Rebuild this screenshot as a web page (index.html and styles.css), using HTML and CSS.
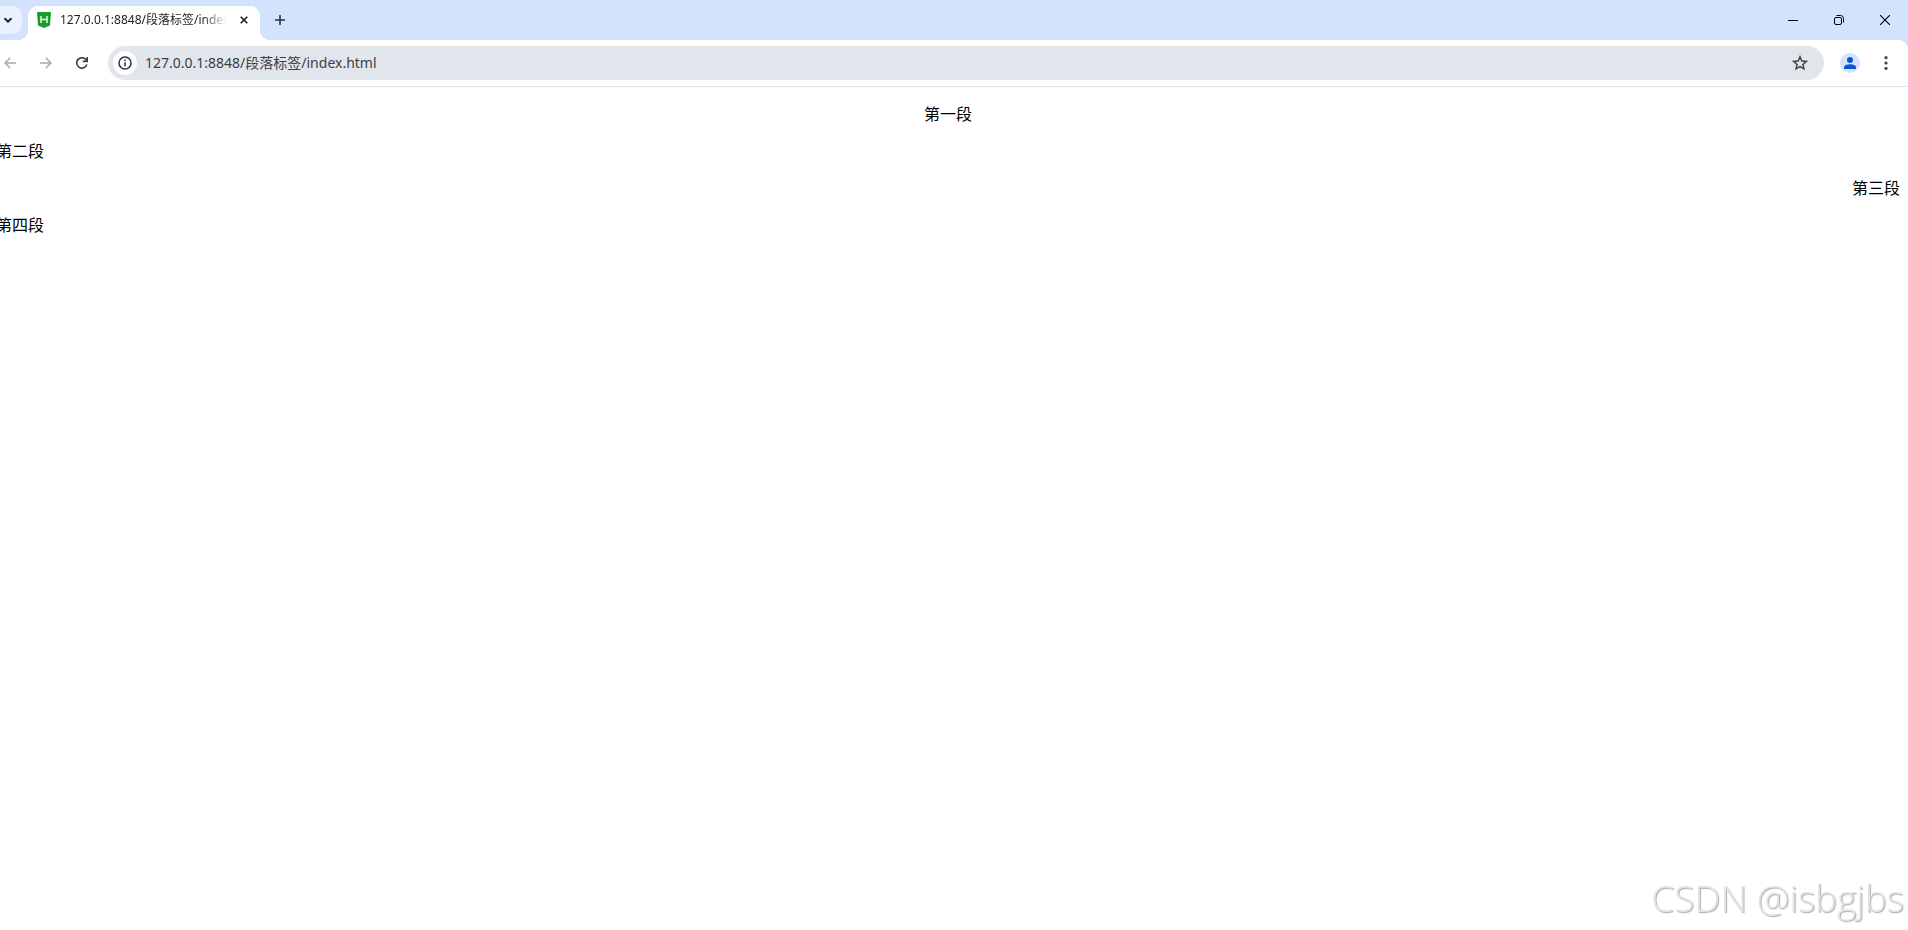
FILE: index.html
```html
<!DOCTYPE html>
<html lang="zh-CN">
<head>
  <meta charset="UTF-8" />
  <meta name="viewport" content="width=device-width, initial-scale=1.0"/>
  <title>段落标签</title>
  <link rel="stylesheet" href="styles.css">
</head>
<body>
  <div class="browser">
    <header class="tab-strip">
      <button class="tab-search" aria-label="搜索标签页">
        <svg width="10" height="10" viewBox="0 0 10 10"><path d="M1.5 3.2 5 6.7 8.5 3.2" fill="none" stroke="#1f1f1f" stroke-width="2"/></svg>
      </button>
      <div class="tab">
        <svg width="14" height="16" viewBox="0 0 14 16">
          <path d="M0 0h14l-1 13.5L7 16 1 13.5z" fill="#1a9c2f"/>
          <path d="M4 4v7M10 4v7M4 7.5h6" fill="none" stroke="#e6f7e8" stroke-width="1.5"/>
        </svg>
        <span class="tab-title">127.0.0.1:8848/段落标签/index.html</span>
        <button class="tab-close" aria-label="关闭">
          <svg width="8" height="8" viewBox="0 0 8 8"><path d="M.7.7l6.6 6.6M7.3.7.7 7.3" stroke="#1f1f1f" stroke-width="1.6"/></svg>
        </button>
      </div>
      <button class="new-tab" aria-label="新标签页">
        <svg width="10" height="10" viewBox="0 0 10 10"><path d="M5 0v10M0 5h10" stroke="#333" stroke-width="1.6"/></svg>
      </button>
      <div class="window-controls">
        <button aria-label="最小化">
          <svg width="10" height="10" viewBox="0 0 10 10"><path d="M0 5.5h10" stroke="#000"/></svg>
        </button>
        <button aria-label="还原">
          <svg width="10" height="10" viewBox="0 0 10 10" fill="none" stroke="#000">
            <rect x=".5" y="2.5" width="7" height="7" rx="1.5"/>
            <path d="M2.5.5h4a3 3 0 0 1 3 3v4"/>
          </svg>
        </button>
        <button aria-label="关闭窗口">
          <svg width="10" height="10" viewBox="0 0 10 10"><path d="M0 0l10 10M10 0 0 10" stroke="#000" stroke-width="1.1"/></svg>
        </button>
      </div>
    </header>

    <nav class="toolbar">
      <button class="icon-btn" aria-label="后退">
        <svg width="12" height="12" viewBox="0 0 12 12" fill="none" stroke="#a9a9a9" stroke-width="1.5"><path d="M12 6H1M6.3.7 1 6l5.3 5.3"/></svg>
      </button>
      <button class="icon-btn" aria-label="前进">
        <svg width="12" height="12" viewBox="0 0 12 12" fill="none" stroke="#a9a9a9" stroke-width="1.5"><path d="M0 6h11M5.7.7 11 6l-5.3 5.3"/></svg>
      </button>
      <button class="icon-btn" aria-label="重新加载">
        <svg width="12" height="12" viewBox="0 0 12 12" fill="none" stroke="#3c3c3c" stroke-width="1.6"><path d="M10.9 7.5A5.2 5.2 0 1 1 9.9 2.5L11 3.8M11.2 0v4.4H6.8"/></svg>
      </button>
      <form class="address-bar">
        <button type="button" class="site-info" aria-label="查看网站信息">
          <svg width="14" height="14" viewBox="0 0 14 14" fill="none" stroke="#333" stroke-width="1.5"><circle cx="7" cy="7" r="6"/><path d="M7 6.3v4M7 3.5v1.6"/></svg>
        </button>
        <input type="text" class="address" aria-label="地址" value="127.0.0.1:8848/段落标签/index.html">
        <button type="button" class="bookmark" aria-label="为此标签页添加书签">
          <svg width="16" height="16" viewBox="0 0 16 16"><path d="M8 1.8 9.8 6l4.5.4-3.4 3 1 4.4L8 11.5l-3.9 2.3 1-4.400-3.400-3L6.200 6z" fill="none" stroke="#444" stroke-width="1.5"/></svg>
        </button>
      </form>
      <button class="icon-btn" aria-label="个人资料">
        <svg width="20" height="20" viewBox="0 0 20 20"><circle cx="10" cy="10" r="10" fill="#d3e3fd"/><circle cx="10" cy="7" r="3" fill="#0b57d0"/><path d="M4 16v-1.500C4 12.300 7 11.200 10 11.200s6 1.100 6 3.300V16z" fill="#0b57d0"/></svg>
      </button>
      <button class="icon-btn" aria-label="菜单">
        <svg width="4" height="14" viewBox="0 0 4 14" fill="#444"><circle cx="2" cy="1.7" r="1.6"/><circle cx="2" cy="7" r="1.6"/><circle cx="2" cy="12.3" r="1.6"/></svg>
      </button>
    </nav>

    <main class="page">
      <p class="center">第一段</p>
      <p>第二段</p>
      <p class="right">第三段</p>
      <p>第四段</p>
    </main>
  </div>

  <div class="watermark">CSDN @isbgjbs</div>
</body>
</html>
```
FILE: styles.css
```css
:root {
  --strip-color: #d3e3fd;
  --address-color: #e1e6ed;
  --font-family: "Noto Sans", "Noto Sans CJK SC", sans-serif;
}

* {
  box-sizing: border-box;
}

body {
  margin: 0;
  min-height: 100vh;
  overflow: hidden;
  background-color: #fff;
  font-family: var(--font-family);
}

button {
  display: flex;
  align-items: center;
  justify-content: center;
  padding: 0;
  border: none;
  background: none;
}

svg {
  display: block;
  flex: none;
}

/* the left edge of the window runs off screen */
.browser {
  margin-left: -12px;
}

.tab-strip {
  display: flex;
  align-items: flex-start;
  height: 40px;
  padding-left: 6px;
  background-color: var(--strip-color);
}

.tab-search {
  width: 28px;
  height: 28px;
  margin-top: 6px;
  border-radius: 10px;
  background-color: #e9f1fe;
}

.tab {
  position: relative;
  display: flex;
  align-items: center;
  width: 232px;
  height: 34px;
  margin: 6px 6px 0;
  padding: 0 8px 6px 9px;
  border-radius: 10px 10px 0 0;
  background-color: #fff;
}

.tab::before,
.tab::after {
  content: "";
  position: absolute;
  bottom: 0;
  width: 10px;
  height: 10px;
}

.tab::before {
  left: -10px;
  background: radial-gradient(circle at 0 0, transparent 10px, #fff 10px);
}

.tab::after {
  right: -10px;
  background: radial-gradient(circle at 100% 0, transparent 10px, #fff 10px);
}

.tab-title {
  flex: 1;
  margin: 0 9px;
  overflow: hidden;
  white-space: nowrap;
  font-size: 12px;
  line-height: 18px;
  color: #1f1f1f;
  -webkit-mask-image: linear-gradient(to right, #000 85%, transparent);
  mask-image: linear-gradient(to right, #000 85%, transparent);
}

.tab-close {
  width: 16px;
  height: 16px;
}

.new-tab {
  width: 28px;
  height: 28px;
  margin-top: 6px;
}

.window-controls {
  display: flex;
  margin-left: auto;
}

.window-controls button {
  width: 46px;
  height: 40px;
}

.toolbar {
  display: flex;
  align-items: center;
  gap: 8px;
  height: 47px;
  padding: 0 8px;
  border-bottom: 1px solid #dfe1e3;
  background: radial-gradient(circle at 0 100%, #fff 10px, var(--strip-color) 10px) top right / 10px 10px no-repeat;
}

.icon-btn {
  width: 28px;
  height: 28px;
}

.address-bar {
  display: flex;
  flex: 1;
  align-items: center;
  height: 34px;
  margin: 0 4px;
  padding: 0 14px 0 5px;
  border-radius: 17px;
  background-color: var(--address-color);
}

.site-info {
  width: 24px;
  height: 24px;
  border-radius: 50%;
  background-color: #fff;
}

.address {
  flex: 1;
  height: 24px;
  margin-left: 8px;
  padding: 0 0 2px;
  border: none;
  outline: none;
  background: none;
  font-family: var(--font-family);
  font-size: 14px;
  color: #3c3f43;
}

.bookmark {
  width: 20px;
  height: 20px;
}

.page {
  padding: 0 8px;
}

.page p {
  margin: 16px 0;
  font-family: "Noto Sans CJK SC", sans-serif;
  font-size: 16px;
  line-height: 21px;
  color: #000;
}

.page .center {
  text-align: center;
}

.page .right {
  text-align: right;
}

.watermark {
  position: fixed;
  right: 4px;
  bottom: 8px;
  font-family: "Open Sans", sans-serif;
  font-size: 37px;
  font-weight: 300;
  line-height: 48px;
  color: #e4e4e4;
  text-shadow: 1px 1px 1px #aaa;
}
```
